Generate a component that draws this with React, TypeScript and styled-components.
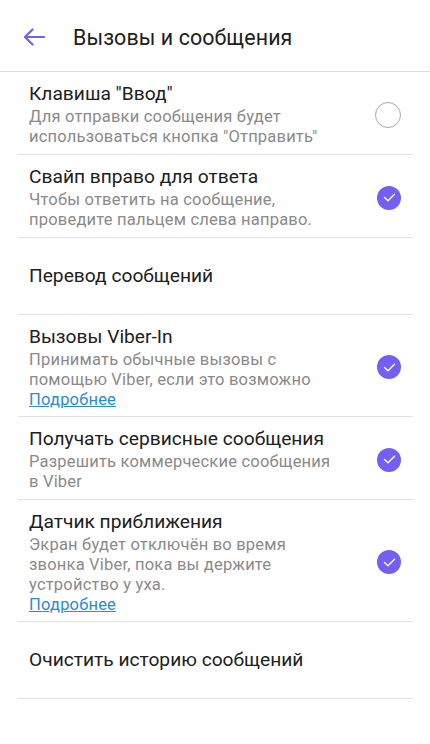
import React from 'react';
import styled, {createGlobalStyle} from 'styled-components';

const GlobalStyle = createGlobalStyle`
  html, body {
    margin: 0;
    padding: 0;
    background: #ffffff;
  }
  body {
    font-family: Roboto, "Noto Sans", "Liberation Sans", sans-serif;
    -webkit-font-smoothing: antialiased;
  }
`;

type Setting = {
  title: string;
  text?: string[];
  link?: boolean;
  check?: 'on' | 'off';
};

const settings: Setting[] = [
  {title: 'Клавиша "Ввод"', text: ['Для отправки сообщения будет', 'использоваться кнопка "Отправить"'], check: 'off'},
  {title: 'Свайп вправо для ответа', text: ['Чтобы ответить на сообщение,', 'проведите пальцем слева направо.'], check: 'on'},
  {title: 'Перевод сообщений'},
  {title: 'Вызовы Viber-In', text: ['Принимать обычные вызовы с', 'помощью Viber, если это возможно'], link: true, check: 'on'},
  {title: 'Получать сервисные сообщения', text: ['Разрешить коммерческие сообщения', 'в Viber'], check: 'on'},
  {title: 'Датчик приближения', text: ['Экран будет отключён во время', 'звонка Viber, пока вы держите', 'устройство у уха.'], link: true, check: 'on'},
  {title: 'Очистить историю сообщений'},
];

function App() {
  return (
    <Screen>
      <GlobalStyle />
      <Header>
        <BackButton>
          <svg width="22" height="18" viewBox="0 0 22 18" fill="none">
            <path d="M21 9H2.5M9.5 1.5L2 9l7.5 7.5" stroke="#7360f2" strokeWidth="2.2" strokeLinecap="round" strokeLinejoin="round" />
          </svg>
        </BackButton>
        <HeaderTitle>Вызовы и сообщения</HeaderTitle>
      </Header>

      <List>
        {settings.map((s) => (
          <Row key={s.title} single={!s.text}>
            <RowText>
              <RowTitle>{s.title}</RowTitle>
              {s.text && s.text.map((line) => <RowSub key={line}>{line}</RowSub>)}
              {s.link && <MoreLink href="#">Подробнее</MoreLink>}
            </RowText>
            {s.check === 'on' && (
              <CheckOn>
                <svg width="13" height="9" viewBox="0 0 13 9" fill="none">
                  <path d="M1.5 4.5l3.5 3.3L11.5 1.2" stroke="#ffffff" strokeWidth="1.4" strokeLinecap="round" strokeLinejoin="round" />
                </svg>
              </CheckOn>
            )}
            {s.check === 'off' && <CheckOff />}
          </Row>
        ))}
      </List>
    </Screen>
  );
}

export default App;

let Screen : any = styled.div`
  width: 430px;
  min-height: 744px;
  background: #ffffff;
`;

let Header : any = styled.div`
  height: 71px;
  display: flex;
  align-items: center;
  border-bottom: 1px solid #dcdcdc;
`;

let BackButton : any = styled.div`
  width: 22px;
  height: 18px;
  margin-left: 23px;
  margin-top: 2px;
  display: flex;
`;

let HeaderTitle : any = styled.div`
  margin-left: 28px;
  font-size: 21.4px;
  color: #202020;
  letter-spacing: 0.1px;
  margin-top: 3px;
`;

let List : any = styled.div`
  padding: 0 17px 0 18px;
`;

let Row : any = styled.div<{single?: boolean}>`
  display: flex;
  align-items: center;
  min-height: ${(p: any) => (p.single ? '76px' : 'auto')};
  padding: ${(p: any) => (p.single ? '0 12px 0 11px' : '10px 12px 7px 11px')};
  border-bottom: 1px solid #e3e3e3;
`;

let RowText : any = styled.div`
  flex: 1;
  display: flex;
  flex-direction: column;
`;

let RowTitle : any = styled.div`
  font-size: 19.2px;
  line-height: 24px;
  color: #202020;
  margin-bottom: 1px;
`;

let RowSub : any = styled.div`
  font-size: 16.5px;
  line-height: 20px;
  letter-spacing: 0.2px;
  color: #8a8a8a;
  white-space: nowrap;
`;

let MoreLink : any = styled.a`
  font-size: 16.5px;
  line-height: 19px;
  letter-spacing: 0.2px;
  color: #2d8bd0;
  text-decoration: underline;
  align-self: flex-start;
`;

let CheckOn : any = styled.div`
  width: 24px;
  height: 24px;
  border-radius: 50%;
  background: #7360f2;
  display: flex;
  align-items: center;
  justify-content: center;
  flex-shrink: 0;
`;

let CheckOff : any = styled.div`
  width: 24px;
  height: 24px;
  border-radius: 50%;
  border: 1px solid #a8a8a8;
  flex-shrink: 0;
`;
